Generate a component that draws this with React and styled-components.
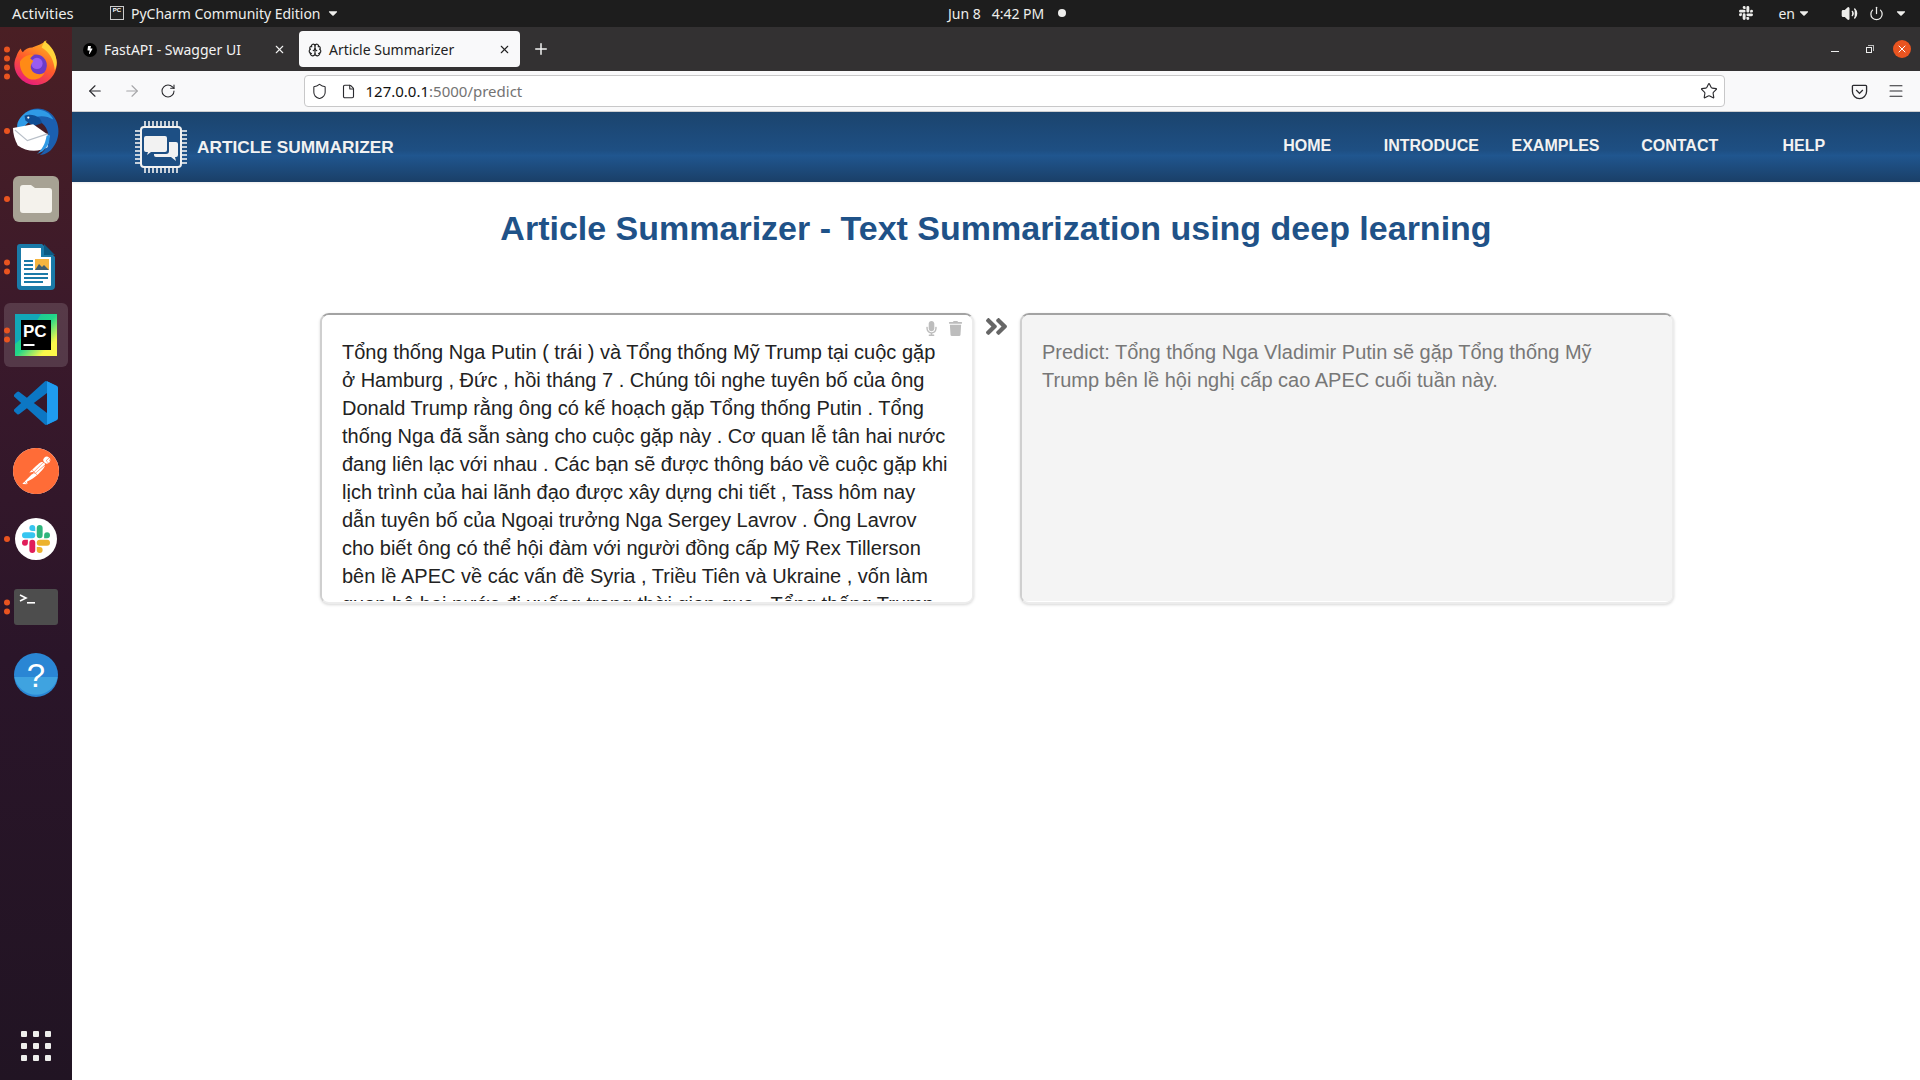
import React from "react";
import styled, { createGlobalStyle } from "styled-components";
import { ArrowLeft, ArrowRight, RotateCw, Shield, File, Star, Menu, Plus, X, Brain, Power, Volume2 } from "lucide-react";
import { FaMicrophone, FaTrash, FaAngleDoubleRight, FaBolt, FaCaretDown } from "react-icons/fa";
import { SiPostman } from "react-icons/si";

const GlobalStyle = createGlobalStyle`
  html, body { margin: 0; height: 100%; background: #fff; }
  body { font-family: "Liberation Sans", Arial, sans-serif; overflow: hidden; }
  * { box-sizing: border-box; }
`;

const Screen = styled.div`
  display: grid;
  grid-template-rows: 27px 1fr;
  height: 100vh;
`;

const TopBar = styled.div`
  display: flex;
  align-items: center;
  padding-bottom: 1px;
  background: #1d1d1d;
  color: #eeeeec;
  font-family: "Noto Sans", sans-serif;
  font-size: 14px;
`;

const TopLeft = styled.div`
  display: flex;
  align-items: center;
  flex: 0 0 948px;
  padding-left: 12px;
`;

const Activities = styled.span`
  width: 98px;
  font-size: 14.8px;
`;

const AppMenuIcon = styled.span`
  display: flex;
  align-items: flex-start;
  justify-content: center;
  width: 14px;
  height: 14px;
  margin-right: 7px;
  border: 1px solid #ccc;
  background: #222;
  color: #fff;
  font: bold 6px "Liberation Sans", sans-serif;
`;

const Clock = styled.span`
  display: flex;
  align-items: center;
  gap: 14px;
  font-size: 14px;
  white-space: pre;
`;

const RecDot = styled.span`
  width: 8px;
  height: 8px;
  border-radius: 50%;
  background: #eeeeec;
`;

const TopRight = styled.div`
  display: flex;
  align-items: center;
  margin-left: auto;
  padding-right: 12px;
`;

const Lang = styled.span`
  display: flex;
  align-items: center;
  gap: 2px;
  margin: 0 30px 0 25px;
`;

const Body = styled.div`
  display: grid;
  grid-template-columns: 72px 1fr;
  min-height: 0;
`;

const Dock = styled.aside`
  display: flex;
  flex-direction: column;
  padding-top: 2px;
  background: linear-gradient(180deg, #4a1f24 0%, #3a192b 30%, #2a1529 60%, #211423 100%);
`;

const DockItem = styled.div`
  position: relative;
  display: flex;
  align-items: center;
  justify-content: center;
  height: 68px;
  &::before {
    content: "";
    position: absolute;
    inset: 2px 4px;
    border-radius: 6px;
    background: ${(p) => (p.$active ? "rgba(255,255,255,0.14)" : "transparent")};
  }
  svg { position: relative; }
`;

const Dots = styled.div`
  position: absolute;
  left: 4px;
  top: 50%;
  display: flex;
  flex-direction: column;
  gap: 3px;
  transform: translateY(-50%);
`;

const Dot = styled.span`
  width: 6px;
  height: 6px;
  border-radius: 50%;
  background: #e95420;
`;

const AppGrid = styled.div`
  display: grid;
  grid-template-columns: repeat(3, 6px);
  gap: 6px;
  justify-content: center;
  margin: auto 0 19px;
`;

const AppGridDot = styled.span`
  width: 6px;
  height: 6px;
  border-radius: 1px;
  background: #eeeeec;
`;

const PostmanBadge = styled.span`
  position: relative;
  display: flex;
  width: 46px;
  height: 46px;
  border-radius: 50%;
  background: #fff;
  color: #ff6c37;
`;

const Browser = styled.div`
  display: flex;
  flex-direction: column;
  min-width: 0;
`;

const TabBar = styled.div`
  display: flex;
  align-items: flex-end;
  gap: 4px;
  height: 44px;
  padding: 0 0 4px 2px;
  background: #333132;
  font-family: "Noto Sans", sans-serif;
  font-size: 14px;
`;

const Tab = styled.div`
  display: flex;
  align-items: center;
  width: 221px;
  height: 36px;
  padding: 1px 9px 0 9px;
  border-radius: 4px;
  background: ${(p) => (p.$active ? "#f9f9fa" : "transparent")};
  color: ${(p) => (p.$active ? "#222" : "#f3f3f3")};
`;

const TabTitle = styled.span`
  flex: 1;
  margin-left: 7px;
`;

const Favicon = styled.span`
  display: flex;
  align-items: center;
  justify-content: center;
  width: 14px;
  height: 14px;
  border-radius: 50%;
  background: #000;
  color: #fff;
  font-size: 8px;
`;

const NewTab = styled.div`
  display: flex;
  align-items: center;
  justify-content: center;
  width: 32px;
  height: 36px;
  margin-left: 1px;
  color: #f3f3f3;
`;

const WindowButtons = styled.div`
  display: flex;
  align-items: center;
  gap: 27px;
  margin-left: auto;
  padding-right: 9px;
  height: 36px;
  color: #eee;
`;

const MinimizeIcon = styled.span`
  width: 8px;
  height: 1px;
  margin-top: 4px;
  background: #eee;
`;

const RestoreIcon = styled.span`
  position: relative;
  width: 6px;
  height: 6px;
  margin-top: 2px;
  border: 1px solid #eee;
  &::after {
    content: "";
    position: absolute;
    top: -3px;
    right: -3px;
    width: 5px;
    height: 5px;
    border-top: 1px solid #bbb;
    border-right: 1px solid #bbb;
  }
`;

const CloseCircle = styled.span`
  display: flex;
  align-items: center;
  justify-content: center;
  width: 18px;
  height: 18px;
  margin-left: -6px;
  border-radius: 50%;
  background: #e95420;
  color: #fff;
`;

const Toolbar = styled.div`
  display: flex;
  align-items: center;
  height: 41px;
  padding: 0 6px 0 5px;
  border-bottom: 1px solid #cfcfd0;
  background: #f9f9fa;
  color: #2a2a2e;
`;

const ToolButton = styled.span`
  display: flex;
  align-items: center;
  justify-content: center;
  width: 36.5px;
  color: ${(p) => (p.$dim ? "#a6a6a8" : "#2a2a2e")};
`;

const UrlBar = styled.div`
  display: flex;
  align-items: center;
  width: 1421px;
  height: 32px;
  margin-left: 117px;
  padding: 0 6px;
  border: 1px solid #c8c8c9;
  border-radius: 4px;
  background: #fff;
  font-family: "Noto Sans", sans-serif;
  font-size: 15px;
  color: #737373;
`;

const UrlHost = styled.span`
  color: #111;
`;

const UrlIcon = styled.span`
  display: flex;
  width: ${(p) => p.$w}px;
`;

const UrlText = styled.span`
  flex: 1;
`;

const ToolRight = styled.div`
  display: flex;
  margin-left: auto;
`;

const Page = styled.main`
  flex: 1;
  background: #fff;
`;

const Header = styled.header`
  display: flex;
  align-items: center;
  height: 70px;
  padding-left: 63px;
  background: linear-gradient(180deg, #1b446e 0%, #1e4f83 55%, #20568f 62%, #1a3f67 100%);
  box-shadow: 0 1px 2px rgba(0, 0, 0, 0.08);
  color: #f2f2f2;
`;

const Brand = styled.div`
  display: flex;
  align-items: center;
  gap: 10px;
  font-size: 17.3px;
  font-weight: bold;
`;

const Nav = styled.nav`
  display: flex;
  margin-left: auto;
  margin-right: 54px;
  padding-bottom: 2px;
`;

const NavItem = styled.a`
  width: 124.2px;
  text-align: center;
  font-size: 16px;
  font-weight: bold;
`;

const Title = styled.h1`
  margin: 26px 0 65px;
  text-align: center;
  font-size: 34px;
  line-height: 40px;
  font-weight: bold;
  color: #1f5288;
`;

const Panels = styled.div`
  display: flex;
  justify-content: center;
  padding-left: 2px;
`;

const Panel = styled.div`
  position: relative;
  width: 654px;
  height: 291px;
  overflow: hidden;
  border: 2px solid #ececec;
  border-top-color: #a3a3a3;
  border-left-color: #cfcfcf;
  border-radius: 9px;
  background: #fff;
  box-shadow: 0 1px 3px rgba(0, 0, 0, 0.16);
`;

const PanelText = styled.div`
  height: 286px;
  overflow: hidden;
  padding: 23px 21px 0 20px;
  font-size: 20px;
  line-height: 28px;
  background: ${(p) => (p.$output ? "#f4f4f4" : "#fff")};
  color: ${(p) => (p.$output ? "#777" : "#222")};
`;

const PanelTools = styled.div`
  position: absolute;
  top: 6px;
  right: 9px;
  display: flex;
  gap: 9px;
  color: #bdbdbd;
  font-size: 15px;
`;

const Swap = styled.div`
  display: flex;
  justify-content: center;
  width: 46px;
  padding-right: 2px;
  color: #666;
  font-size: 27px;
`;

// small hand drawn icons for the launcher
const Firefox = () => (
  <svg width="46" height="47" viewBox="0 0 48 50" style={{ marginTop: -2 }}>
    <defs>
      <linearGradient id="ff" x1="0.7" y1="0" x2="0.2" y2="1">
        <stop offset="0" stopColor="#ffb51f" />
        <stop offset="0.5" stopColor="#ff5a2c" />
        <stop offset="1" stopColor="#e31587" />
      </linearGradient>
    </defs>
    <path d="M3 19c1-4 3-7 5-9 0 2 1 3 2 4 2-3 6-5 10-5 5-2 12-4 15-8-1 4 0 7 3 9 5 4 9 11 8 18-1 11-10 21-22 21C12 49 1 39 1 27c0-3 1-6 2-8z" fill="url(#ff)" />
    <path d="M33 2c7 5 13 13 13 23 0 3-1 6-2 8-1-10-5-19-14-24 1-2 2-5 3-7z" fill="#ffd43a" />
    <circle cx="24" cy="28" r="11.5" fill="#6b3bc8" />
    <circle cx="25" cy="26" r="6" fill="#9a5cf0" />
    <path d="M7 24c3-5 9-8 15-7-2 1-4 3-4 4 2 1 3 2 3 3-4 4-3 9 1 12 3 2 8 2 11 0-2 5-8 8-14 7C12 42 6 33 7 24z" fill="#ff8a16" />
  </svg>
);

const Thunderbird = () => (
  <svg width="48" height="48" viewBox="0 0 50 50">
    <path d="M14 6C24-2 40 1 46 14c5 11 2 25-8 33-3 2-6 3-9 3 5-4 9-10 9-18C38 20 30 12 18 14l-6 1z" fill="#1b5fb0" />
    <path d="M6 16C10 6 20 1 30 3c6 1 11 5 13 10-7-4-16-5-23 0L7 26c-2-3-2-7-1-10z" fill="#2f9ae6" />
    <path d="M13 9c5-2 11-1 15 2 2 2 3 4 3 6l-9 3-8-6z" fill="#0f4d94" />
    <circle cx="17" cy="11" r="1.2" fill="#fff" />
    <path d="M1 22l21-4 17 12-2 12c-9 5-22 5-31-2-3-5-5-12-5-18z" fill="#fff" />
    <path d="M3 24l13 11 21-7" fill="none" stroke="#b8bfc8" strokeWidth="1.2" />
    <path d="M36 30l3-1c1 7-2 13-7 17l-6 3c5-4 9-11 10-19z" fill="#2f9ae6" />
  </svg>
);

const Files = () => (
  <svg width="46" height="46" viewBox="0 0 46 46">
    <rect width="46" height="46" rx="6" fill="#a7a294" />
    <path d="M7 12a3 3 0 0 1 3-3h8l4 3h14a3 3 0 0 1 3 3v19a3 3 0 0 1-3 3H10a3 3 0 0 1-3-3z" fill="#f4f2ec" />
  </svg>
);

const Writer = () => (
  <svg width="38" height="46" viewBox="0 0 38 46">
    <path d="M3 0h22l13 13v29a4 4 0 0 1-4 4H4a4 4 0 0 1-4-4V3a3 3 0 0 1 3-3z" fill="#1a7aa8" />
    <path d="M27 0l11 11-11 0z" fill="#0d5a82" />
    <path d="M4 4h20v9h10v28a1 1 0 0 1-1 1H5a1 1 0 0 1-1-1z" fill="#fff" />
    <g fill="#1a7aa8">
      <rect x="7" y="16" width="9" height="2" />
      <rect x="7" y="20" width="9" height="2" />
      <rect x="7" y="24" width="9" height="2" />
      <rect x="7" y="29" width="24" height="2" />
      <rect x="7" y="33" width="24" height="2" />
      <rect x="7" y="37" width="19" height="2" />
    </g>
    <rect x="18" y="15" width="14" height="11" fill="#f5b53f" />
    <path d="M18 26l4-6 3 3 2-2 5 5z" fill="#3f5d6e" />
  </svg>
);

const PyCharm = () => (
  <svg width="42" height="42" viewBox="0 0 42 42">
    <defs>
      <linearGradient id="pc" x1="0" y1="0" x2="1" y2="1">
        <stop offset="0" stopColor="#1ab3a6" />
        <stop offset="0.5" stopColor="#21d789" />
        <stop offset="0.8" stopColor="#fcf84a" />
      </linearGradient>
    </defs>
    <rect width="42" height="42" fill="url(#pc)" />
    <path d="M0 0h26L16 16 0 30z" fill="#12a8b8" />
    <rect x="6" y="6" width="30" height="30" fill="#000" />
    <text x="8" y="23" fill="#fff" fontFamily="Liberation Sans" fontWeight="bold" fontSize="17">PC</text>
    <rect x="8.5" y="30" width="11" height="2" fill="#fff" />
  </svg>
);

const VsCode = () => (
  <svg width="44" height="44" viewBox="0 0 24 24">
    <path fill="#0c77c4" d="M23.15 2.587L18.21.21a1.494 1.494 0 0 0-1.705.29l-9.46 8.63-4.12-3.128a.999.999 0 0 0-1.276.057L.327 7.261A1 1 0 0 0 .326 8.74L3.899 12 .326 15.26a1 1 0 0 0 .001 1.479L1.65 17.94a.999.999 0 0 0 1.276.057l4.12-3.128 9.46 8.63a1.492 1.492 0 0 0 1.704.29l4.942-2.377A1.5 1.5 0 0 0 24 20.06V3.939a1.5 1.5 0 0 0-.85-1.352zm-5.146 14.861L10.826 12l7.178-5.448v10.896z" />
    <path fill="#1f9cf0" d="M18.004 0.1l5.146 2.487A1.5 1.5 0 0 1 24 3.939V20.06a1.5 1.5 0 0 1-.85 1.352L18.004 23.9z" />
  </svg>
);

const Postman = () => (
  <PostmanBadge>
    <SiPostman size={46} />
  </PostmanBadge>
);

const Slack = () => (
  <svg width="42" height="42" viewBox="0 0 42 42">
    <circle cx="21" cy="21" r="21" fill="#fff" />
    <g transform="translate(7 7) scale(1.1667)">
      <path fill="#e01e5a" d="M5.042 15.165a2.528 2.528 0 0 1-2.52 2.523A2.528 2.528 0 0 1 0 15.165a2.527 2.527 0 0 1 2.522-2.52h2.52v2.52zM6.313 15.165a2.527 2.527 0 0 1 2.521-2.52 2.527 2.527 0 0 1 2.521 2.52v6.313A2.528 2.528 0 0 1 8.834 24a2.528 2.528 0 0 1-2.521-2.522v-6.313z" />
      <path fill="#36c5f0" d="M8.834 5.042a2.528 2.528 0 0 1-2.521-2.52A2.528 2.528 0 0 1 8.834 0a2.528 2.528 0 0 1 2.521 2.522v2.52H8.834zM8.834 6.313a2.528 2.528 0 0 1 2.521 2.521 2.528 2.528 0 0 1-2.521 2.521H2.522A2.528 2.528 0 0 1 0 8.834a2.528 2.528 0 0 1 2.522-2.521h6.312z" />
      <path fill="#2eb67d" d="M18.956 8.834a2.528 2.528 0 0 1 2.522-2.521A2.528 2.528 0 0 1 24 8.834a2.528 2.528 0 0 1-2.522 2.521h-2.522V8.834zM17.688 8.834a2.528 2.528 0 0 1-2.523 2.521 2.527 2.527 0 0 1-2.52-2.521V2.522A2.527 2.527 0 0 1 15.165 0a2.528 2.528 0 0 1 2.523 2.522v6.312z" />
      <path fill="#ecb22e" d="M15.165 18.956a2.528 2.528 0 0 1 2.523 2.522A2.528 2.528 0 0 1 15.165 24a2.527 2.527 0 0 1-2.52-2.522v-2.522h2.52zM15.165 17.688a2.527 2.527 0 0 1-2.52-2.523 2.526 2.526 0 0 1 2.52-2.52h6.313A2.527 2.527 0 0 1 24 15.165a2.528 2.528 0 0 1-2.522 2.523h-6.313z" />
    </g>
  </svg>
);

const Terminal = () => (
  <svg width="44" height="36" viewBox="0 0 44 36">
    <rect width="44" height="36" rx="3" fill="#4d4d4d" />
    <path d="M6 6l6 3-6 3" fill="none" stroke="#fff" strokeWidth="1.6" />
    <rect x="13" y="13" width="8" height="1.6" fill="#fff" />
  </svg>
);

const Help = () => (
  <svg width="44" height="44" viewBox="0 0 44 44">
    <circle cx="22" cy="22" r="22" fill="#2a86d4" />
    <path d="M0.4 24h43.2A22 22 0 0 1 0.4 24z" fill="#3fa3e0" />
    <text x="22" y="34" textAnchor="middle" fill="#fff" fontFamily="Liberation Sans" fontSize="33">?</text>
  </svg>
);

const pins = Array.from({ length: 9 }, (_, i) => 10 + i * 4);

const ChipLogo = () => (
  <svg width="52" height="52" viewBox="0 0 52 52">
    <g stroke="#f2f2f2" strokeWidth="1.6">
      {pins.map((p) => (
        <g key={p}>
          <line x1={p} y1="0" x2={p} y2="6" />
          <line x1={p} y1="46" x2={p} y2="52" />
          <line x1="0" y1={p} x2="6" y2={p} />
          <line x1="46" y1={p} x2="52" y2={p} />
        </g>
      ))}
    </g>
    <rect x="6" y="6" width="40" height="40" rx="3" fill="#1d4f84" stroke="#f2f2f2" strokeWidth="2" />
    <path d="M11 15h19a2 2 0 0 1 2 2v12a2 2 0 0 1-2 2H16l-4 3 1-3h-2a2 2 0 0 1-2-2V17a2 2 0 0 1 2-2z" fill="#f2f2f2" />
    <path d="M34 21h7a2 2 0 0 1 2 2v11a2 2 0 0 1-2 2h-1l1 4-5-4H21a2 2 0 0 1-2-2v-1h12a3 3 0 0 0 3-3z" fill="#f2f2f2" />
  </svg>
);

const SlackTray = () => (
  <svg width="14" height="14" viewBox="0 0 24 24" fill="#eeeeec">
    <path d="M5 15a2.5 2.5 0 1 1-2.5-2.4H5zM6.3 15a2.5 2.5 0 0 1 5 0v6.5a2.5 2.5 0 0 1-5 0zM8.8 5a2.5 2.5 0 1 1 2.5-2.5V5zM8.8 6.3a2.5 2.5 0 0 1 0 5H2.5a2.5 2.5 0 0 1 0-5zM19 8.8a2.5 2.5 0 1 1 2.5 2.5H19zM17.7 8.8a2.5 2.5 0 0 1-5 0V2.5a2.5 2.5 0 0 1 5 0zM15.2 19a2.5 2.5 0 1 1-2.5 2.5V19zM15.2 17.7a2.5 2.5 0 0 1 0-5h6.3a2.5 2.5 0 0 1 0 5z" />
  </svg>
);

const PocketIcon = () => (
  <svg width="17" height="17" viewBox="0 0 18 18" fill="none" stroke="#2a2a2e" strokeWidth="1.4">
    <path d="M2.5 2.5h13a1 1 0 0 1 1 1V9a7.5 7.5 0 0 1-15 0V3.5a1 1 0 0 1 1-1z" />
    <path d="M5.5 7.5L9 11l3.5-3.5" />
  </svg>
);

const dockApps = [
  { key: "firefox", Icon: Firefox, dots: 4 },
  { key: "thunderbird", Icon: Thunderbird, dots: 1 },
  { key: "files", Icon: Files, dots: 1 },
  { key: "writer", Icon: Writer, dots: 2 },
  { key: "pycharm", Icon: PyCharm, dots: 2, active: true },
  { key: "vscode", Icon: VsCode, dots: 0 },
  { key: "postman", Icon: Postman, dots: 0 },
  { key: "slack", Icon: Slack, dots: 1 },
  { key: "terminal", Icon: Terminal, dots: 2 },
  { key: "help", Icon: Help, dots: 0 },
];

const navLinks = ["HOME", "INTRODUCE", "EXAMPLES", "CONTACT", "HELP"];

const articleText =
  "Tổng thống Nga Putin ( trái ) và Tổng thống Mỹ Trump tại cuộc gặp ở Hamburg , Đức , hồi tháng 7 . Chúng tôi nghe tuyên bố của ông Donald Trump rằng ông có kế hoạch gặp Tổng thống Putin . Tổng thống Nga đã sẵn sàng cho cuộc gặp này . Cơ quan lễ tân hai nước đang liên lạc với nhau . Các bạn sẽ được thông báo về cuộc gặp khi lịch trình của hai lãnh đạo được xây dựng chi tiết , Tass hôm nay dẫn tuyên bố của Ngoại trưởng Nga Sergey Lavrov . Ông Lavrov cho biết ông có thể hội đàm với người đồng cấp Mỹ Rex Tillerson bên lề APEC về các vấn đề Syria , Triều Tiên và Ukraine , vốn làm quan hệ hai nước đi xuống trong thời gian qua . Tổng thống Trump";

const predictText =
  "Predict: Tổng thống Nga Vladimir Putin sẽ gặp Tổng thống Mỹ Trump bên lề hội nghị cấp cao APEC cuối tuần này.";

export default function App() {
  return (
    <>
      <GlobalStyle />
      <Screen>
        <TopBar>
          <TopLeft>
            <Activities>Activities</Activities>
            <AppMenuIcon>PC</AppMenuIcon>
            PyCharm Community Edition
            <FaCaretDown size={14} style={{ marginLeft: 5 }} />
          </TopLeft>
          <Clock>
            Jun 8   4:42 PM
            <RecDot />
          </Clock>
          <TopRight>
            <SlackTray />
            <Lang>
              en <FaCaretDown size={14} />
            </Lang>
            <Volume2 size={17} fill="#eeeeec" />
            <Power size={15} style={{ margin: "0 10px 0 11px" }} />
            <FaCaretDown size={14} />
          </TopRight>
        </TopBar>
        <Body>
          <Dock>
            {dockApps.map(({ key, Icon, dots, active }) => (
              <DockItem key={key} $active={active}>
                <Dots>
                  {Array.from({ length: dots }, (_, i) => (
                    <Dot key={i} />
                  ))}
                </Dots>
                <Icon />
              </DockItem>
            ))}
            <AppGrid>
              {Array.from({ length: 9 }, (_, i) => (
                <AppGridDot key={i} />
              ))}
            </AppGrid>
          </Dock>
          <Browser>
            <TabBar>
              <Tab>
                <Favicon>
                  <FaBolt />
                </Favicon>
                <TabTitle>FastAPI - Swagger UI</TabTitle>
                <X size={13} />
              </Tab>
              <Tab $active>
                <Brain size={14} />
                <TabTitle>Article Summarizer</TabTitle>
                <X size={13} />
              </Tab>
              <NewTab>
                <Plus size={18} />
              </NewTab>
              <WindowButtons>
                <MinimizeIcon />
                <RestoreIcon />
                <CloseCircle>
                  <X size={12} />
                </CloseCircle>
              </WindowButtons>
            </TabBar>
            <Toolbar>
              <ToolButton>
                <ArrowLeft size={18} strokeWidth={1.5} />
              </ToolButton>
              <ToolButton $dim>
                <ArrowRight size={18} strokeWidth={1.5} />
              </ToolButton>
              <ToolButton>
                <RotateCw size={16} strokeWidth={1.6} />
              </ToolButton>
              <UrlBar>
                <UrlIcon $w={30}>
                  <Shield size={17} strokeWidth={1.5} color="#2a2a2e" />
                </UrlIcon>
                <UrlIcon $w={25}>
                  <File size={15} strokeWidth={1.8} color="#2a2a2e" />
                </UrlIcon>
                <UrlText>
                  <UrlHost>127.0.0.1</UrlHost>:5000/predict
                </UrlText>
                <Star size={18} strokeWidth={1.5} color="#2a2a2e" />
              </UrlBar>
              <ToolRight>
                <ToolButton>
                  <PocketIcon />
                </ToolButton>
                <ToolButton>
                  <Menu size={18} strokeWidth={1.4} />
                </ToolButton>
              </ToolRight>
            </Toolbar>
            <Page>
              <Header>
                <Brand>
                  <ChipLogo />
                  ARTICLE SUMMARIZER
                </Brand>
                <Nav>
                  {navLinks.map((link) => (
                    <NavItem key={link}>{link}</NavItem>
                  ))}
                </Nav>
              </Header>
              <Title>Article Summarizer - Text Summarization using deep learning</Title>
              <Panels>
                <Panel>
                  <PanelTools>
                    <FaMicrophone />
                    <FaTrash />
                  </PanelTools>
                  <PanelText>{articleText}</PanelText>
                </Panel>
                <Swap>
                  <FaAngleDoubleRight />
                </Swap>
                <Panel>
                  <PanelText $output>{predictText}</PanelText>
                </Panel>
              </Panels>
            </Page>
          </Browser>
        </Body>
      </Screen>
    </>
  );
}
